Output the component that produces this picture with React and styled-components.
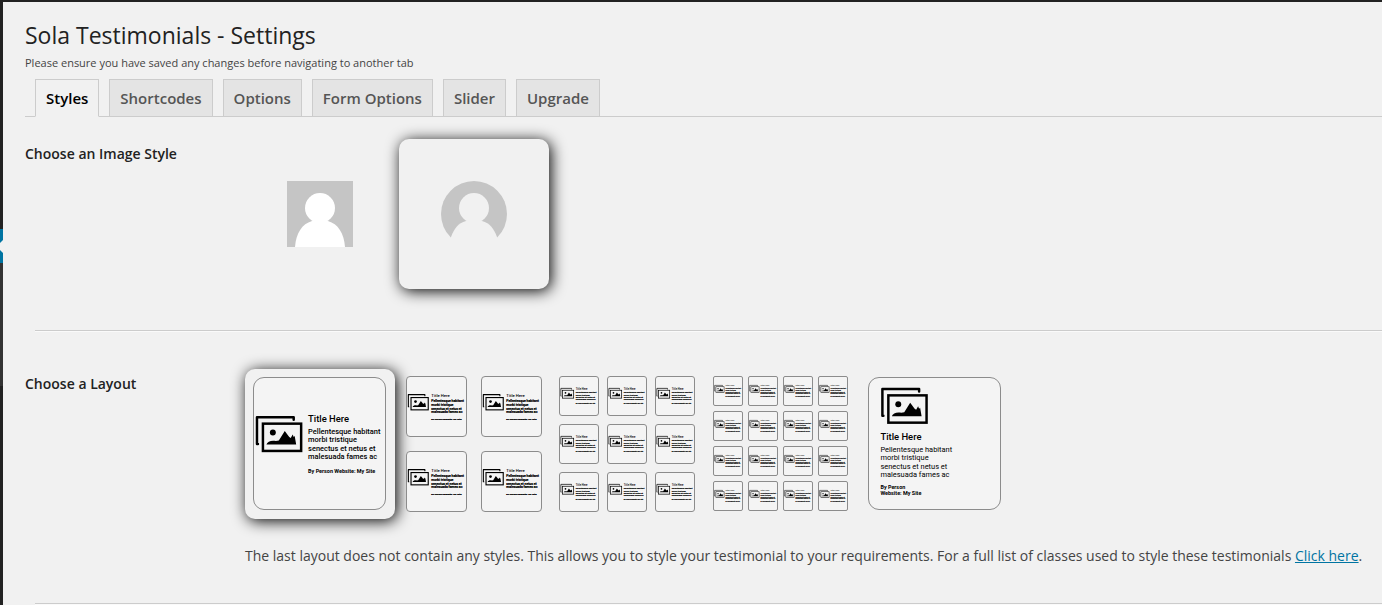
import React, { useState } from 'react'
import styled, { createGlobalStyle } from 'styled-components'

const GlobalStyle = createGlobalStyle`
  * {
    box-sizing: border-box;
  }

  body {
    margin: 0;
    background: #f1f1f1;
    color: #444;
    font-family: "Open Sans", sans-serif;
    font-size: 14px;
    line-height: 20px;
  }
`;

const Page = styled.div`
  display: flex;
  min-height: 100vh;
  border-top: 2px solid #222;
  overflow: hidden;
`;

const MenuEdge = styled.div`
  display: flex;
  flex-direction: column;
  flex: 0 0 3px;
  background: #222;
`;

const MenuSpace = styled.div`
  height: 227px;
`;

const CurrentItem = styled.svg`
  display: block;
  width: 3px;
  height: 34px;
  background: #0074a2;
`;

const SubMenu = styled.div`
  height: 123px;
  background: #333;
`;

const Content = styled.main`
  flex: 1;
  min-width: 0;
  padding: 19px 0 0 22px;
`;

const Title = styled.h1`
  margin: 0;
  color: #222;
  font-size: 23px;
  font-weight: 400;
  line-height: 29px;
`;

const Note = styled.p`
  margin: 3px 0 6px;
  font-size: 11px;
`;

const Tabs = styled.nav`
  display: flex;
  gap: 10px;
  padding-left: 10px;
  border-bottom: 1px solid #ccc;
`;

const Tab = styled.a`
  padding: 6px 10px;
  border: 1px solid #ccc;
  border-bottom: ${props => props.$active ? '1px solid #f1f1f1' : 'none'};
  margin-bottom: ${props => props.$active ? '-1px' : '0'};
  background: ${props => props.$active ? '#f1f1f1' : '#e4e4e4'};
  color: ${props => props.$active ? '#000' : '#555'};
  font-size: 15px;
  font-weight: 600;
  line-height: 24px;
  text-decoration: none;
`;

const Row = styled.section`
  display: grid;
  grid-template-columns: 220px 1fr;
  padding: ${props => props.$first ? '22px 0 41px' : '37px 0'};
`;

const RowTitle = styled.h2`
  margin: 5px 0 0;
  color: #222;
  font-size: 14px;
  font-weight: 600;
  line-height: 20px;
`;

const Choices = styled.div`
  display: flex;
  gap: 4px;
`;

const Choice = styled.button`
  display: grid;
  place-content: ${props => props.$center ? 'center' : 'start'};
  flex: 0 0 150px;
  height: 150px;
  padding: ${props => props.$pad || '0'};
  border: none;
  border-radius: 10px;
  background: ${props => props.$selected ? '#f1f1f1' : 'transparent'};
  box-shadow: ${props => props.$selected ? '2px 2px 15px #000' : 'none'};
  cursor: pointer;
`;

const Avatar = styled.svg`
  display: block;
  width: 66px;
  height: 66px;
`;

const Thumbs = styled.div`
  display: grid;
  grid-template-columns: repeat(${props => props.$columns}, auto);
  gap: ${props => props.$gap};
`;

const Card = styled.svg`
  display: block;
  width: ${props => props.$size}px;
  height: ${props => props.$size}px;
  border: 1px solid #8c8c8c;
  border-radius: ${props => props.$radius}px;
  background: #f4f4f4;
  font-family: Roboto, sans-serif;
`;

const Help = styled.p`
  margin: 27px 0 0;
`;

const HelpLink = styled.a`
  color: #0074a2;
`;

const Divider = styled.hr`
  margin: 0 0 0 10px;
  border: none;
  border-top: 1px solid #ccc;
  border-bottom: 1px solid #fafafa;
`;

const tabs = ['Styles', 'Shortcodes', 'Options', 'Form Options', 'Slider', 'Upgrade']

const layouts = [
  { name: 'One column', columns: 1, size: 133, radius: 11, gap: '0', pad: '8px' },
  { name: 'Two columns', columns: 2, size: 61, radius: 4, gap: '14px', pad: '7px' },
  { name: 'Three columns', columns: 3, size: 40, radius: 3, gap: '8px', pad: '7px 6px' },
  { name: 'Four columns', columns: 4, size: 30, radius: 2, gap: '5px', pad: '7px 6px' },
  { name: 'No styles', columns: 1, size: 133, radius: 11, gap: '0', pad: '8px 7px', stacked: true },
]

// Drawn on a 264 x 264 canvas so that it can be scaled to every thumbnail
function Picture({ x, y }) {
  return (
    <g transform={`translate(${x} ${y})`}>
      <path d="M5 57H3V3H77V8" fill="none" stroke="#000" strokeWidth="5" strokeLinecap="round" strokeLinejoin="round" />
      <rect x="15" y="16" width="77" height="55" fill="#f4f4f4" stroke="#000" strokeWidth="5" />
      <circle cx="35" cy="34" r="6" />
      <path d="M22 58C24 52 32 49 41 51L47 50L59 31L68 43L71 45L75 38L77 43L79 41L82 58Z" />
    </g>
  )
}

function TestimonialCard({ size, radius, stacked }) {
  const x = stacked ? 23 : 109
  const top = stacked ? 125 : 88
  return (
    <Card $size={size} $radius={radius} viewBox="0 0 264 264">
      <Picture x={stacked ? 24 : 3} y={stacked ? 19 : 76} />
      <text x={x} y={top} fontSize="19" fontWeight="500">Title Here</text>
      <g fontSize="15" fontWeight={stacked ? 400 : 500} stroke="#000" strokeWidth={size < 100 ? 1 : 0}>
        <text x={x} y={top + 24}>Pellentesque habitant</text>
        <text x={x} y={top + 41}>morbi tristique</text>
        <text x={x} y={top + 59}>senectus et netus et</text>
        <text x={x} y={top + 75}>malesuada fames ac</text>
      </g>
      <g fontSize="11" fontWeight="700" stroke="#000" strokeWidth={size < 100 ? 1 : 0}>
        {stacked ? (
          <>
            <text x={x} y={top + 98}>By Person</text>
            <text x={x} y={top + 110}>Website: My Site</text>
          </>
        ) : (
          <text x={x} y={top + 103}>By Person Website: My Site</text>
        )}
      </g>
    </Card>
  )
}

export default function App() {
  const [tab, setTab] = useState('Styles')
  const [imageStyle, setImageStyle] = useState('round')
  const [layout, setLayout] = useState('One column')

  return (
    <Page>
      <GlobalStyle />
      <MenuEdge>
        <MenuSpace />
        <CurrentItem viewBox="0 0 3 34">
          <path d="M3 11L0 14V21L3 24Z" fill="#f1f1f1" />
        </CurrentItem>
        <SubMenu />
      </MenuEdge>
      <Content>
        <Title>Sola Testimonials - Settings</Title>
        <Note>Please ensure you have saved any changes before navigating to another tab</Note>
        <Tabs>
          {tabs.map(name => (
            <Tab key={name} href="#" $active={name === tab} onClick={() => setTab(name)}>{name}</Tab>
          ))}
        </Tabs>

        <Row $first>
          <RowTitle>Choose an Image Style</RowTitle>
          <Choices>
            <Choice
              $center
              aria-label="Square image"
              aria-pressed={imageStyle === 'square'}
              $selected={imageStyle === 'square'}
              onClick={() => setImageStyle('square')}
            >
              <Avatar viewBox="0 0 66 66">
                <rect width="66" height="66" fill="#c5c5c5" />
                <circle cx="33" cy="27" r="15" fill="#fff" />
                <path d="M8 66C9 52 15 43 25 40H41C51 43 57 52 58 66Z" fill="#fff" />
              </Avatar>
            </Choice>
            <Choice
              $center
              aria-label="Round image"
              aria-pressed={imageStyle === 'round'}
              $selected={imageStyle === 'round'}
              onClick={() => setImageStyle('round')}
            >
              <Avatar viewBox="0 0 66 66">
                <circle cx="33" cy="33" r="33" fill="#c5c5c5" />
                <circle cx="33" cy="27" r="15" fill="#f1f1f1" />
                <path d="M8 66L10 56C13 48 17 42 25 40H41C49 42 53 48 56 56L58 66Z" fill="#f1f1f1" />
              </Avatar>
            </Choice>
          </Choices>
        </Row>
        <Divider />

        <Row>
          <RowTitle>Choose a Layout</RowTitle>
          <div>
            <Choices>
              {layouts.map(item => (
                <Choice
                  key={item.name}
                  aria-label={item.name}
                  aria-pressed={item.name === layout}
                  $pad={item.pad}
                  $selected={item.name === layout}
                  onClick={() => setLayout(item.name)}
                >
                  <Thumbs $columns={item.columns} $gap={item.gap}>
                    {Array.from({ length: item.columns * item.columns }, (_, i) => (
                      <TestimonialCard key={i} size={item.size} radius={item.radius} stacked={item.stacked} />
                    ))}
                  </Thumbs>
                </Choice>
              ))}
            </Choices>
            <Help>
              The last layout does not contain any styles. This allows you to style your testimonial to your requirements. For a full list of classes used to style these testimonials <HelpLink href="#">Click here</HelpLink>.
            </Help>
          </div>
        </Row>
        <Divider />
      </Content>
    </Page>
  )
}
